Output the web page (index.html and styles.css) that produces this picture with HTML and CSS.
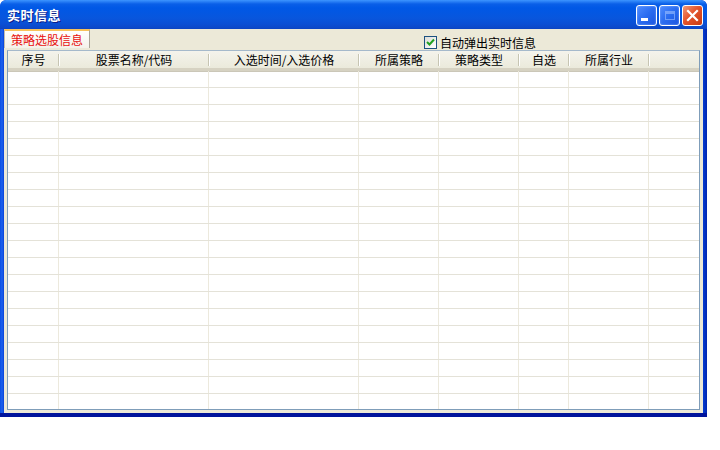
FILE: index.html
```html
<!DOCTYPE html>
<html>
<head>
<meta charset="utf-8">
<link rel="stylesheet" href="styles.css">
</head>
<body>
<div class="window">
  <div class="titlebar">
    <span class="title">实时信息</span>
    <div class="buttons">
      <div class="tbtn min"><span class="minbar"></span></div>
      <div class="tbtn max"><span class="maxbox"></span></div>
      <div class="tbtn close">
        <svg width="13" height="13" viewBox="0 0 13 13"><path d="M2 2 L11 11 M11 2 L2 11" stroke="#fff" stroke-width="2.2" stroke-linecap="square"/></svg>
      </div>
    </div>
  </div>
  <div class="client">
    <div class="toprow">
      <div class="tab">策略选股信息</div>
      <label class="check">
        <span class="box"><svg width="9" height="9" viewBox="0 0 9 9"><path d="M1 4 L3.5 6.5 L8 1.5" stroke="#21a121" stroke-width="2" fill="none"/></svg></span>
        <span>自动弹出实时信息</span>
      </label>
    </div>
    <div class="grid">
      <div class="head">
        <div class="hc">序号</div>
        <div class="hc">股票名称/代码</div>
        <div class="hc">入选时间/入选价格</div>
        <div class="hc">所属策略</div>
        <div class="hc">策略类型</div>
        <div class="hc">自选</div>
        <div class="hc">所属行业</div>
        <div class="hc last"></div>
      </div>
      <div class="body" id="body"></div>
    </div>
  </div>
</div>
<script src="script.js"></script>
</body>
</html>
```
FILE: script.js
```js
var b = document.getElementById('body');
var html = '';
for (var i = 0; i < 21; i++) {
  html += '<div class="row">';
  for (var j = 0; j < 8; j++) html += '<div class="c"></div>';
  html += '</div>';
}
b.innerHTML = html;
```
FILE: styles.css
```css
html, body { margin: 0; padding: 0; background: #fff; }
body { width: 720px; height: 450px; overflow: hidden; font-family: "Noto Sans CJK SC", "Noto Sans", sans-serif; font-size: 12px; }
.window {
  width: 707px; height: 417px; box-sizing: border-box;
  border-radius: 6px 6px 0 0;
  display: flex; flex-direction: column;
  padding: 0 4px 4px 4px;
  background: linear-gradient(to right, #0a4ee4 0, #1c62ee 2px, #0842d9 4px, #0842d9 702px, #0026b0 707px);
  box-shadow: inset 0 -4px 0 #00149c;
  overflow: hidden;
}
.titlebar {
  height: 29px; flex: none; box-sizing: border-box;
  margin: 0 -4px 0 -4px;
  padding: 0 4px 0 7px;
  border-radius: 6px 6px 0 0;
  background: linear-gradient(to bottom, #3d95ff 0, #0a5fe8 4px, #0058e6 8px, #0856dd 18px, #0a4fd4 24px, #0c48c8 28px, #0a42c0 29px);
  display: flex; align-items: center; justify-content: space-between;
}
.title { color: #fff; font-weight: bold; font-size: 13px; text-shadow: 1px 1px 0 #0a1e8a; letter-spacing: 0.5px; }
.buttons { display: flex; gap: 2px; margin-top: 1px; }
.tbtn {
  width: 21px; height: 21px; box-sizing: border-box;
  border: 1px solid #fff; border-radius: 3px;
  display: flex; align-items: center; justify-content: center;
}
.min, .max { background: linear-gradient(135deg, #4f8cff 0, #2a6cf0 50%, #1c55df 100%); box-shadow: inset 0 0 2px #8ab4ff; }
.close { background: linear-gradient(135deg, #f09a7a 0, #e4542c 45%, #c83a12 100%); }
.minbar { width: 7px; height: 3px; background: #fff; margin-top: 9px; margin-right: 4px; }
.maxbox { width: 10px; height: 9px; border: 1px solid #9ec0ff; border-top-width: 3px; box-sizing: border-box; opacity: 0.6; }
.client {
  flex: 1; min-height: 0; background: #ece9d8;
  display: flex; flex-direction: column;
  padding: 0 0 3px 0;
}
.toprow { height: 21px; display: flex; align-items: flex-start; justify-content: space-between; flex: none; }
.tab {
  margin-left: 0; width: 86px; height: 19px; box-sizing: border-box;
  color: #e8100e;
  border-top: 2px solid #f8c25a; border-left: 1px solid #c0bcae; border-right: 1px solid #a8a496;
  display: flex; align-items: center; justify-content: center; line-height: 12px;
  background: linear-gradient(#fffffe, #f4f2ea);
}
.check { display: flex; align-items: center; gap: 3px; margin: 5px 167px 0 0; color: #000; }
.box {
  width: 13px; height: 13px; box-sizing: border-box; border: 1px solid #1c5180;
  background: linear-gradient(135deg, #dcdcd7, #fff);
  display: flex; align-items: center; justify-content: center;
}
.grid {
  flex: 1; min-height: 0; margin: 0 3px;
  border: 1px solid #7f9db9; border-top-color: #a5b9cb;
  background: #fff; overflow: hidden;
}
.head, .row {
  display: grid;
  grid-template-columns: 51px 150px 150px 80px 80px 50px 80px 1fr;
}
.head {
  height: 20px; box-sizing: border-box;
  background: linear-gradient(#f4f3ec, #ebeadb);
  border-bottom: 3px solid #d6d2c2;
  box-shadow: 0 1px 0 #cbc7b8;
}
.hc {
  display: flex; align-items: center; justify-content: center;
  position: relative; color: #000; line-height: 14px; padding-top: 1px;
}
.hc::after {
  content: ""; position: absolute; right: 0; top: 3px; bottom: 2px;
  width: 1px; background: #c7c5b2; box-shadow: 1px 0 0 #fff;
}
.hc.last::after { display: none; }
.row { height: 17px; box-sizing: border-box; border-bottom: 1px solid #e4e2d8; }
.c { border-right: 1px solid #ece9dd; }
.c:last-child { border-right: none; }
```
